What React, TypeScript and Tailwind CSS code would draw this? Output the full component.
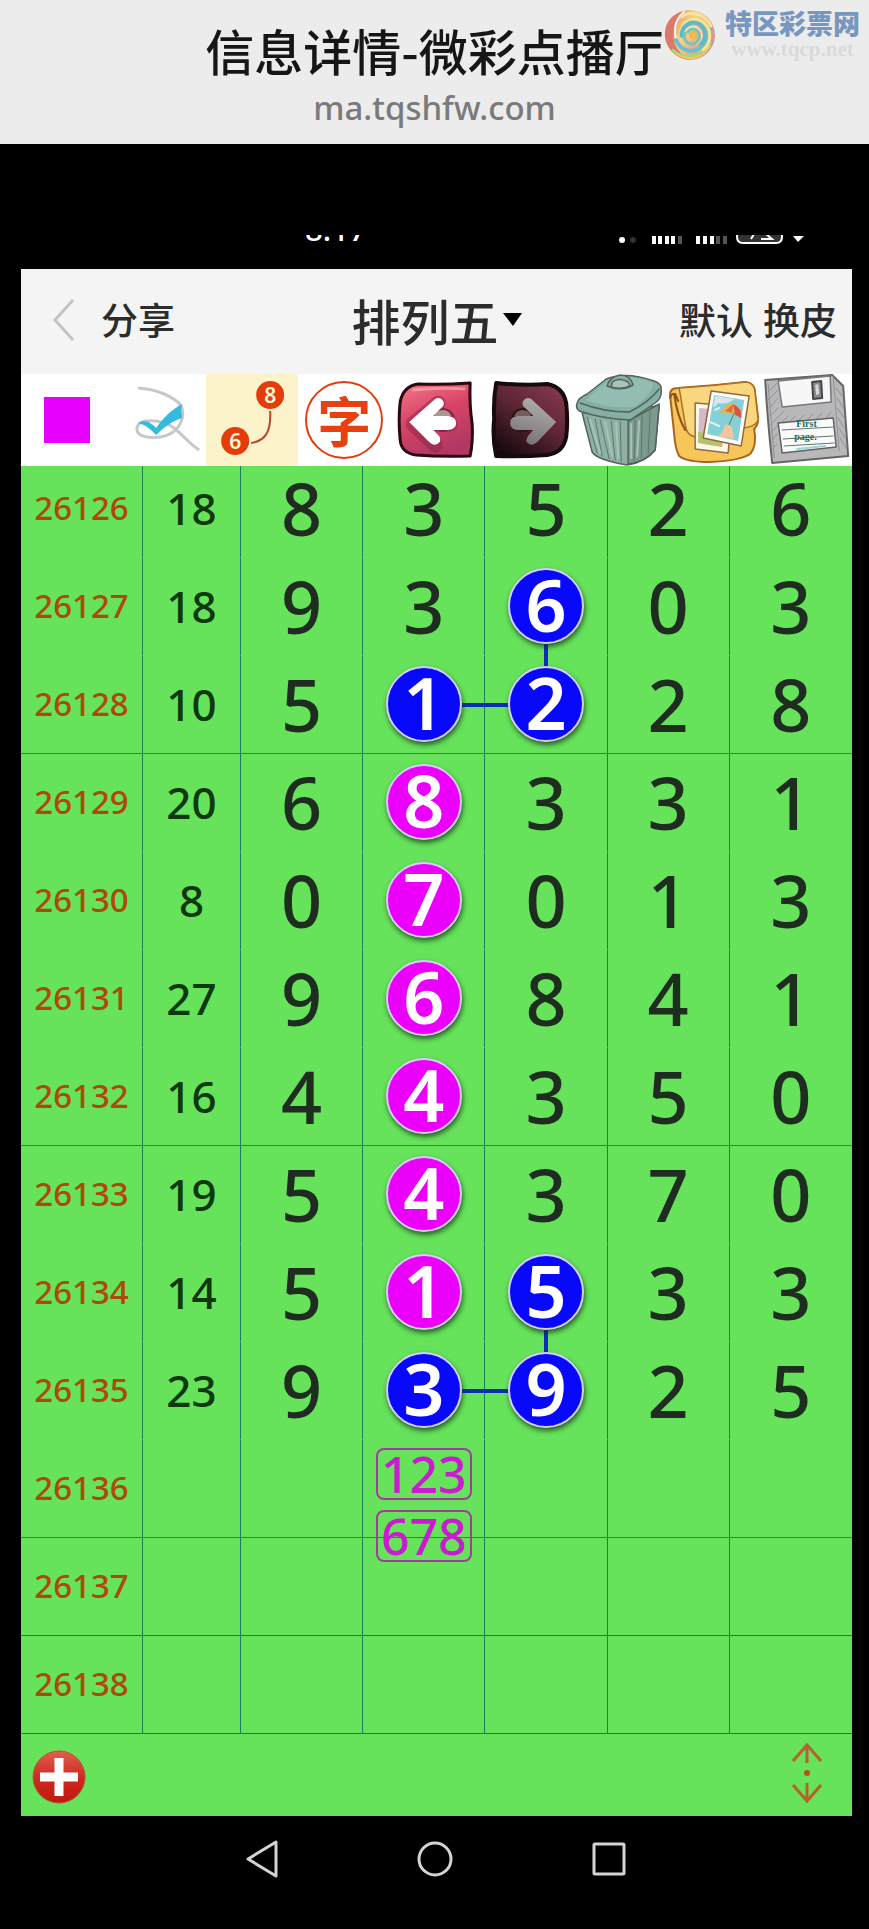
import { useState } from 'react';
import type { ReactNode } from 'react';
import clsx from 'clsx';

type Ball = 'blue' | 'pink';

interface Draw {
  period: string;
  sum?: number;
  digits?: number[];
  balls?: Record<number, Ball>;
  down?: number;
  right?: number;
  notes?: string[];
  line?: 'red' | 'teal';
}

const draws: Draw[] = [
  { period: '26126', sum: 18, digits: [8, 3, 5, 2, 6] },
  { period: '26127', sum: 18, digits: [9, 3, 6, 0, 3], balls: { 2: 'blue' }, down: 2 },
  { period: '26128', sum: 10, digits: [5, 1, 2, 2, 8], balls: { 1: 'blue', 2: 'blue' }, right: 1, line: 'red' },
  { period: '26129', sum: 20, digits: [6, 8, 3, 3, 1], balls: { 1: 'pink' } },
  { period: '26130', sum: 8, digits: [0, 7, 0, 1, 3], balls: { 1: 'pink' } },
  { period: '26131', sum: 27, digits: [9, 6, 8, 4, 1], balls: { 1: 'pink' } },
  { period: '26132', sum: 16, digits: [4, 4, 3, 5, 0], balls: { 1: 'pink' }, line: 'red' },
  { period: '26133', sum: 19, digits: [5, 4, 3, 7, 0], balls: { 1: 'pink' } },
  { period: '26134', sum: 14, digits: [5, 1, 5, 3, 3], balls: { 1: 'pink', 2: 'blue' }, down: 2 },
  { period: '26135', sum: 23, digits: [9, 3, 9, 2, 5], balls: { 1: 'blue', 2: 'blue' }, right: 1 },
  { period: '26136', notes: ['123', '678'], line: 'red' },
  { period: '26137', line: 'teal' },
  { period: '26138', line: 'teal' },
];

function SiteLogo() {
  return (
    <div className="absolute right-[9px] top-2 flex items-center gap-2">
      <svg viewBox="0 0 54 54" className="w-[54px] h-[54px]" fill="none" strokeLinecap="round">
        <defs>
          <linearGradient id="swirl" x1="0" y1="0.2" x2="1" y2="0.8">
            <stop offset="0" stopColor="#e0806e" />
            <stop offset="0.4" stopColor="#f6d58a" />
            <stop offset="0.75" stopColor="#e99f86" />
            <stop offset="1" stopColor="#b08fb4" />
          </linearGradient>
        </defs>
        <circle cx="27" cy="27" r="25" fill="url(#swirl)" />
        <path d="M20 3C5 7-2 22 4 36c4 9 12 14 22 16C14 44 9 35 11 24 12 15 15 9 20 3Z" fill="#d97a6c" />
        <path d="M21 4C11 12 9 26 16 36c6 8 15 9 23 5" stroke="#fdf6e6" strokeWidth="2" />
        <path d="M13 32c5 12 18 14 27 6 7-6 9-14 6-21" stroke="#6cbfd0" strokeWidth="4" />
        <path d="M10 42c10 10 28 8 37-8" stroke="#a8d47c" strokeWidth="3" />
        <path d="M14 46c10 7 26 5 33-8" stroke="#f1c957" strokeWidth="2" />
        <path d="M18 22C21 10 36 7 44 18c5 8 3 18-4 24" stroke="#fbe38e" strokeWidth="3" />
        <path d="M18 9C28 2 42 6 48 18" stroke="#f9e2a0" strokeWidth="3" />
        <path d="M19 28c-1-10 9-16 17-12 8 5 8 15 2 20" stroke="#5fb9cd" strokeWidth="4" />
        <path d="M21 25c3-6 10-8 15-4 5 5 3 12-2 15" stroke="#fdf6e6" strokeWidth="1" />
        <path d="M22 25c-2 6 1 11 7 11 7-1 9-7 6-12-3-4-8-4-10 0" stroke="#79c6b8" strokeWidth="3" />
        <circle cx="30" cy="27" r="4" fill="#f4b850" />
      </svg>
      <div className="flex flex-col">
        <span className="text-[27px] leading-[28px] font-black text-[#7797bf] font-['Noto_Sans_CJK_SC',sans-serif]">特区彩票网</span>
        <span className="text-[21px] leading-6 font-bold text-[#dadada] font-['Liberation_Serif',serif]">www.tqcp.net</span>
      </div>
    </div>
  );
}

function StatusBar() {
  return (
    <div className="pt-[91px] h-[125px] pl-[50px] pr-[60px]">
      <div className="flex items-start justify-between h-[10px] overflow-hidden text-white">
        <span className="ml-[255px] -mt-[22px] text-[31px] leading-8 font-medium">8:17</span>
        <svg viewBox="0 0 190 10" className="w-[190px] h-[10px]">
          <circle cx="3" cy="5" r="3" fill="#fff" />
          <circle cx="14" cy="5" r="3" fill="#333" />
          <path d="M35 1v8M41 1v8M48 1v8M54 1v8M79 1v8M86 1v8M93 1v8" stroke="#fff" strokeWidth="4" />
          <path d="M61 1v8M99 1v8M106 1v8" stroke="#555" strokeWidth="4" />
          <path d="M118-5v7q0 6 6 6h33q6 0 6-6v-7" fill="#333" stroke="#fff" strokeWidth="2" />
          <path d="M132 4l3-5M142 4h11l-6-5" stroke="#fff" strokeWidth="2" fill="none" />
          <path d="M174 1h11l-6 6Z" fill="#fff" />
        </svg>
      </div>
    </div>
  );
}

function CheckCurve() {
  return (
    <svg viewBox="0 0 92 92" className="w-full h-full" fill="none">
      <path d="M25 14C43 15 62 23 68 32c4 9 0 20-8 26-10 7-27 7-34 2-5-5-1-12 6-13 12-1 22 1 30 8 9 7 14 15 24 21" stroke="#c6c8ca" strokeWidth="3" />
      <path d="M25 49c8-4 13 0 18 5 7-10 15-18 26-24-2 6 0 10 0 14-10 3-19 10-26 17-5-5-10-10-18-12Z" fill="#35b9dd" />
    </svg>
  );
}

function LinkedNumbers() {
  return (
    <svg viewBox="0 0 92 92" className="w-full h-full" fontFamily="Noto Sans" fontWeight="600" fontSize="21" textAnchor="middle">
      <path d="M64 37C65 58 59 67 45 69" fill="none" stroke="#b34a28" strokeWidth="2" />
      <circle cx="64" cy="21" r="14" fill="#e33d0c" />
      <circle cx="29" cy="67" r="14" fill="#e33d0c" />
      <text x="64" y="29" fill="#fff6d8">8</text>
      <text x="29" y="75" fill="#fff6d8">6</text>
    </svg>
  );
}

function UndoArrow() {
  return (
    <svg viewBox="0 0 92 92" className="w-full h-full">
      <defs>
        <linearGradient id="undo" x1="0" y1="0" x2="0.4" y2="1">
          <stop offset="0" stopColor="#f27a8b" />
          <stop offset="0.5" stopColor="#d94468" />
          <stop offset="1" stopColor="#b23863" />
        </linearGradient>
      </defs>
      <path d="M28 10Q53 11 80 9Q79 30 82 50Q83 67 80 82Q50 83 26 81Q11 79 10 66Q8 46 10 28Q13 12 28 10Z" fill="url(#undo)" stroke="#2b0710" strokeWidth="3" strokeLinejoin="round" />
      <path d="M22 16Q50 13 75 15" fill="none" stroke="#fba9a9" strokeWidth="3" opacity="0.7" />
      <circle cx="53" cy="46" r="12" fill="#8e2446" />
      <path d="M23 50L45 71M24 49L48 29M24 50H60" stroke="#8e2446" strokeWidth="15" strokeLinecap="round" opacity="0.5" />
      <path d="M44 42A9 9 0 0 1 61 42Z" fill="#a99a90" />
      <path d="M19 48L45 25Q50 22 53 27Q55 31 51 34L43 42H58Q66 43 66 49Q66 55 58 56H43L49 62Q52 67 47 70Q43 72 39 68Z" fill="#fff" />
    </svg>
  );
}

function RedoArrow() {
  return (
    <svg viewBox="0 0 92 92" className="w-full h-full">
      <defs>
        <linearGradient id="redo" x1="0.8" y1="0" x2="0.1" y2="1">
          <stop offset="0" stopColor="#86384e" />
          <stop offset="0.45" stopColor="#5c2535" />
          <stop offset="1" stopColor="#0e0709" />
        </linearGradient>
        <linearGradient id="redoArrow" x1="0.6" y1="0" x2="0.3" y2="1">
          <stop offset="0" stopColor="#b1adad" />
          <stop offset="1" stopColor="#777273" />
        </linearGradient>
      </defs>
      <path d="M13 9Q42 12 64 10Q80 13 83 29Q85 48 83 63Q80 79 64 81Q38 83 13 82Q9 64 11 45Q10 26 13 9Z" fill="url(#redo)" stroke="#160a0d" strokeWidth="4" strokeLinejoin="round" />
      <circle cx="40" cy="46" r="12" fill="#2b0f18" />
      <path d="M31 42A9 9 0 0 1 48 42Z" fill="#775c58" />
      <path d="M73 48L48 25Q43 22 40 27Q38 31 42 34L50 42H34Q27 43 27 49Q27 55 34 56H50L45 62Q41 67 46 70Q50 72 54 68Z" fill="url(#redoArrow)" />
    </svg>
  );
}

function TrashCan() {
  return (
    <svg viewBox="0 0 92 92" className="w-full h-full" stroke="#53635c" strokeWidth="1.5" strokeLinejoin="round" strokeLinecap="round">
      <path d="M7 39L17 78Q22 86 52 91Q71 88 80 76L84 32Z" fill="#8fb0a4" />
      <path d="M53 47V90Q70 88 80 76L84 30Z" fill="#7d9a8f" />
      <path d="M2 29Q3 24 12 20L31 5Q51-3 79 7Q87 10 86 16Q87 24 80 29L55 46Q27 45 4 37Q0 34 2 29Z" fill="#85afa5" />
      <path d="M5 29Q28 38 54 38Q73 29 84 15" fill="none" />
      <path d="M11 26L34 5Q52-1 78 9Q78 19 59 33Q32 35 11 26Z" fill="#93bdb2" stroke="none" />
      <path d="M32 12Q34 3 45 1Q55 1 58 11Q45 18 32 12Z" fill="#8caea4" />
      <path d="M37 8Q44 3 53 8L55 12Q45 16 36 13Z" fill="#a8c4b9" />
      <path d="M12 43L22 79M20 45L27 82M25 46L34 85M36 47L40 86M45 47L46 88M60 46L59 87M67 41L66 84M75 37L73 80" stroke="#58786a" strokeWidth="1" fill="none" />
      <path d="M15 46L25 79M30 48L37 82M41 49L43 84M56 50V84M64 47L62 82" stroke="#a9c3b7" strokeWidth="2" fill="none" />
    </svg>
  );
}

function PhotoFolder() {
  return (
    <svg viewBox="0 0 92 92" className="w-full h-full" strokeLinejoin="round" strokeLinecap="round">
      <path d="M3 22Q2 14 11 14Q45 12 78 8Q88 9 88 20L91 44Q91 51 87 55Q90 72 83 80Q72 87 42 88Q19 88 12 82Q8 75 7 60Z" fill="#f7c65b" stroke="#a8651d" strokeWidth="2" />
      <path d="M12 14Q46 12 79 8Q88 9 88 20L91 46Q88 53 76 54L29 63Q19 62 18 50Z" fill="#fad77c" stroke="#b06d24" strokeWidth="1.5" />
      <path d="M3 24Q4 19 8 20L11 27M7 20Q10 42 18 56" fill="none" stroke="#8f5218" strokeWidth="2" />
      <path d="M28 29L65 32L61 79L28 75Z" fill="#fff8e7" stroke="#8f6c48" strokeWidth="1.5" />
      <path d="M32 34L57 36L55 73L31 69Z" fill="#d7b7ca" />
      <path d="M31 58L55 61V73L31 69Z" fill="#b6c36b" />
      <path d="M44 17L82 22L74 72L36 64Z" fill="#fffdf6" stroke="#8e6844" strokeWidth="1.5" />
      <path d="M47 21L77 26L71 67L40 60Z" fill="#83d0d6" />
      <path d="M48 22L67 25Q60 31 51 29Q49 32 46 33Z" fill="#dae6ef" />
      <path d="M53 39Q58 29 67 30Q76 34 74 44Q63 37 53 39Z" fill="#edb346" />
      <path d="M66 30Q75 34 74 44L68 41Z" fill="#d95345" />
      <path d="M58 37L66 30L65 39Z" fill="#de6f3f" />
      <path d="M67 39L61 53" stroke="#62766f" strokeWidth="1" />
      <path d="M51 62Q58 56 57 51Q62 49 65 54L67 65Z" fill="#f1c69c" />
      <path d="M43 48L52 52M48 36L52 34" stroke="#d7f3ed" strokeWidth="2" />
    </svg>
  );
}

function FloppyDisk() {
  return (
    <svg viewBox="0 0 92 92" className="w-full h-full" strokeLinejoin="round" strokeLinecap="round">
      <path d="M5 6L72 1L83 12L88 82L12 89Q7 42 5 6Z" fill="#b8b8ba" stroke="#666" strokeWidth="2" />
      <path d="M73 2L79 77M8 10L14 84M8 18L17 9M8 26L18 16M9 34L18 24M10 42L18 34M11 50L24 37M11 58L28 42M12 66L17 60M13 74L17 70M76 14L82 22M77 24L83 34M77 34L84 44M78 44L84 54M79 54L85 64M80 64L86 74M35 42L29 48M44 41L38 47M53 40L47 46M62 39L56 45M71 38L66 44" stroke="#929294" strokeWidth="1" fill="none" />
      <path d="M18 7L70 2L71 28L22 33Z" fill="#f7f7f7" stroke="#77777a" strokeWidth="1.5" />
      <path d="M52 8L61 7L62 24L53 25Z" fill="#8b8b8d" stroke="#44444a" strokeWidth="2" />
      <path d="M55 11L58 10L59 20L56 21Z" fill="#d8d8da" />
      <path d="M18 49L73 44L76 73L22 79Z" fill="#f9fbfa" stroke="#626265" strokeWidth="1.5" />
      <path d="M22 56L73 53M23 65L73 62M24 72L74 69" stroke="#63756f" strokeWidth="1" />
      <path d="M37 75L65 72" stroke="#9bd3d6" strokeWidth="2" />
      <g fontFamily="Liberation Serif" fontWeight="700" fontSize="10" fill="#1c6c58">
        <text x="36" y="53">First</text>
        <text x="34" y="66">page.</text>
      </g>
    </svg>
  );
}

const tools: { name: string; icon: ReactNode }[] = [
  { name: '颜色', icon: <span className="block size-[46px] bg-[#e800ff]" /> },
  { name: '选择', icon: <CheckCurve /> },
  { name: '连线', icon: <LinkedNumbers /> },
  {
    name: '文字',
    icon: (
      <span className="flex items-center justify-center size-[78px] rounded-full border-2 border-[#e33d0c] text-[#e8400f] text-[54px] leading-none font-bold font-['Noto_Sans_CJK_SC',sans-serif]">
        字
      </span>
    ),
  },
  { name: '后退', icon: <UndoArrow /> },
  { name: '前进', icon: <RedoArrow /> },
  { name: '清空', icon: <TrashCan /> },
  { name: '图片', icon: <PhotoFolder /> },
  { name: '保存', icon: <FloppyDisk /> },
];

function DigitCell({ value, ball, down, right }: { value?: number; ball?: Ball; down?: boolean; right?: boolean }) {
  if (!ball) return <>{value}</>;
  return (
    <>
      {down && <span className="absolute left-1/2 top-1/2 w-1 h-24 -ml-0.5 bg-[#0a2fb4]" />}
      {right && <span className="absolute left-1/2 top-1/2 w-full h-1 -mt-0.5 bg-[#0a2fb4]" />}
      <span
        className={clsx(
          'relative z-10 mx-auto flex items-center justify-center size-[76px] pb-1 rounded-full border-2 border-[#d3d0f2] text-white font-semibold shadow-[1px_3px_5px_rgba(20,50,20,0.75)]',
          ball === 'blue' ? 'bg-[#0808fb]' : 'bg-[#ea00fb]',
        )}
      >
        {value}
      </span>
    </>
  );
}

export default function App() {
  const [activeTool, setActiveTool] = useState('连线');

  return (
    <div className="min-h-screen bg-black font-['Noto_Sans','Noto_Sans_CJK_SC',sans-serif]">
      {/* Browser title */}
      <header className="relative h-36 pt-[14px] bg-[#ececec] text-center">
        <h1 className="text-[49px] leading-[72px] font-medium text-[#161616] font-['Noto_Sans_CJK_SC',sans-serif]">信息详情-微彩点播厅</h1>
        <p className="text-[33px] leading-[44px] font-medium text-[#7a7a7a]">ma.tqshfw.com</p>
        <SiteLogo />
      </header>

      <StatusBar />

      <main className="ml-[21px] mr-[17px]">
        {/* Nav */}
        <nav className="grid grid-cols-[1fr_auto_1fr] items-center h-[105px] px-[15px] pb-1 bg-[#f4f4f4] text-[#2c2c2c] text-[37px] leading-none font-medium font-['Noto_Sans_CJK_SC',sans-serif]">
          <a href="#share" className="flex items-center gap-[26px] pl-[17px]">
            <svg viewBox="0 0 22 42" className="w-[22px] h-[42px]" fill="none" stroke="#c4c4c4" strokeWidth="3">
              <path d="M20 1L2 21l18 20" />
            </svg>
            分享
          </a>
          <button className="flex items-center gap-1 text-[49px] leading-none">
            排列五
            <svg viewBox="0 0 19 13" className="w-[19px] h-[13px]"><path d="M0 0h19l-9 13Z" fill="#000" /></svg>
          </button>
          <div className="flex justify-end gap-[10px]">
            <a href="#default">默认</a>
            <a href="#skin">换皮</a>
          </div>
        </nav>

        {/* Toolbar */}
        <div className="grid grid-cols-9 h-[92px] bg-white">
          {tools.map((tool) => (
            <button
              key={tool.name}
              aria-label={tool.name}
              onClick={() => setActiveTool(tool.name)}
              className={clsx('flex items-center justify-center h-[92px]', activeTool === tool.name && 'bg-[#fdf3cb]')}
            >
              {tool.icon}
            </button>
          ))}
        </div>

        {/* Trend grid */}
        <div className="bg-[#66e25b]">
          <table className="w-full table-fixed border-separate border-spacing-0 text-center">
            <colgroup>
              <col className="w-[122px]" />
              <col className="w-[98px]" />
              <col span={5} />
            </colgroup>
            <tbody>
              {draws.map((draw, row) => {
                const border = clsx(
                  'relative px-0 pt-0 border-b border-r border-r-[#1f8058]',
                  row === 0 ? 'h-[92px] pb-2' : 'h-[98px] pb-0.5',
                  draw.line === 'red' && 'border-b-[#9a5a14]',
                  draw.line === 'teal' && 'border-b-[#177f4c]',
                  !draw.line && 'border-b-[#6bdd68]',
                );
                return (
                  <tr key={draw.period}>
                    <th scope="row" className={clsx(border, 'text-[33px] leading-10 font-medium text-[#ab4a0a]')}>{draw.period}</th>
                    <td className={clsx(border, 'text-[44px] leading-[52px] font-medium text-[#10380f]')}>{draw.sum}</td>
                    {[0, 1, 2, 3, 4].map((col) => (
                      <td key={col} className={clsx(border, 'text-[72px] leading-[72px] font-medium text-[#1f2d20] last:border-r-0')}>
                        <DigitCell
                          value={draw.digits?.[col]}
                          ball={draw.balls?.[col]}
                          down={draw.down === col}
                          right={draw.right === col}
                        />
                        {col === 1 && draw.notes && (
                          <div className="absolute inset-x-0 top-2 z-10 flex flex-col items-center gap-[10px]">
                            {draw.notes.map((note) => (
                              <span key={note} className="w-24 h-[52px] rounded-lg border-2 border-[#a03c9c] text-[50px] leading-[48px] text-[#c91bd0]">
                                {note}
                              </span>
                            ))}
                          </div>
                        )}
                      </td>
                    ))}
                  </tr>
                );
              })}
            </tbody>
          </table>

          <div className="flex items-center justify-between h-[82px] pt-1 pl-[11px] pr-[30px]">
            <button aria-label="添加">
              <svg viewBox="0 0 54 54" className="w-[54px] h-[54px]">
                <defs>
                  <linearGradient id="add" x1="0" y1="0" x2="0" y2="1">
                    <stop offset="0" stopColor="#e0604f" />
                    <stop offset="0.5" stopColor="#d02a20" />
                    <stop offset="1" stopColor="#c01a10" />
                  </linearGradient>
                </defs>
                <circle cx="27" cy="27" r="26" fill="url(#add)" stroke="#b4572f" />
                <path d="M27 8v38M8 27h38" stroke="#fff" strokeWidth="9" />
              </svg>
            </button>
            <button aria-label="滚动" className="pb-2">
              <svg viewBox="0 0 30 60" className="w-[30px] h-[60px]" fill="none" stroke="#b4622c" strokeWidth="3">
                <path d="M15 2v18M1 18L15 2l14 16M15 40v18M1 42l14 16 14-16" />
                <circle cx="15" cy="30" r="3" fill="#b8501f" stroke="none" />
              </svg>
            </button>
          </div>
        </div>
      </main>

      {/* System navigation */}
      <footer className="flex items-center justify-center gap-[138px] h-[86px]">
        <button aria-label="返回">
          <svg viewBox="0 0 36 40" className="w-9 h-10" fill="none" stroke="#d4d4d4" strokeWidth="3" strokeLinejoin="round"><path d="M33 3v34L5 20Z" /></svg>
        </button>
        <button aria-label="主页">
          <svg viewBox="0 0 36 36" className="w-9 h-9" fill="none" stroke="#d4d4d4" strokeWidth="3"><circle cx="18" cy="18" r="16" /></svg>
        </button>
        <button aria-label="最近">
          <svg viewBox="0 0 36 36" className="w-9 h-9" fill="none" stroke="#d4d4d4" strokeWidth="3"><rect x="3" y="3" width="30" height="30" rx="1" /></svg>
        </button>
      </footer>
    </div>
  );
}
